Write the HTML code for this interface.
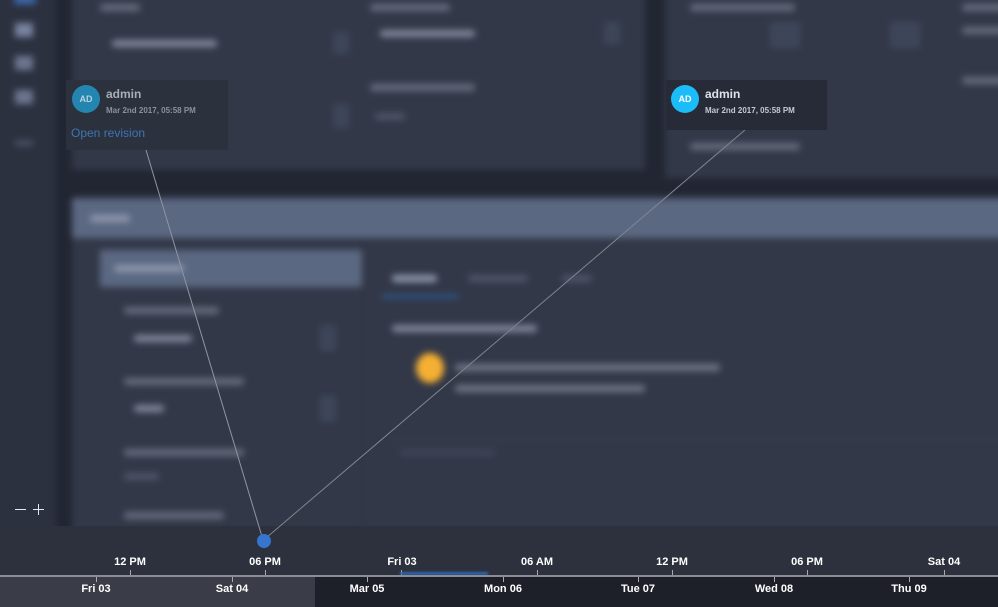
<!DOCTYPE html>
<html><head><meta charset="utf-8"><style>
*{margin:0;padding:0;box-sizing:border-box}
html,body{width:998px;height:607px;overflow:hidden}
body{background:#222632;font-family:"Liberation Sans",sans-serif;position:relative}
.clip{position:absolute;left:0;top:0;width:998px;height:607px;overflow:hidden}
.bg{position:absolute;left:-20px;top:-20px;width:1038px;height:627px;filter:blur(3.5px);background:#222632}
.in{position:absolute;left:20px;top:20px;width:998px;height:587px}
.a{position:absolute}
.t{position:absolute;height:7px;background:#656c7e;border-radius:3px}
.tl{position:absolute;color:#fff;font-size:11px;font-weight:bold;transform:translateX(-50%)}
.tk{position:absolute;width:1px;height:5px;background:#aaa}
</style></head><body>
<div class="clip"><div class="bg"><div class="in">
 <div class="a" style="left:-20px;top:-20px;width:76px;height:607px;background:#2c3140"></div>
 <div class="a" style="left:14px;top:-4px;width:22px;height:8px;background:#3f6bb5;border-radius:3px"></div>
 <div class="a" style="left:15px;top:23px;width:18px;height:14px;background:#7884a0"></div>
 <div class="a" style="left:15px;top:56px;width:18px;height:14px;background:#6b7690"></div>
 <div class="a" style="left:15px;top:90px;width:18px;height:14px;background:#6b7690"></div>
 <div class="a" style="left:15px;top:141px;width:18px;height:4px;background:#555d70"></div>
 <div class="a" style="left:72px;top:-20px;width:573px;height:190px;background:#323848"></div>
 <div class="a" style="left:665px;top:-20px;width:353px;height:198px;background:#323848"></div>
 <div class="t" style="left:100px;top:4px;width:40px"></div>
 <div class="t" style="left:112px;top:40px;width:105px;background:#80879a"></div>
 <div class="a" style="left:333px;top:32px;width:16px;height:22px;background:#3d4659"></div>
 <div class="t" style="left:370px;top:4px;width:80px"></div>
 <div class="t" style="left:380px;top:30px;width:95px;background:#80879a"></div>
 <div class="a" style="left:604px;top:22px;width:16px;height:22px;background:#3d4659"></div>
 <div class="t" style="left:370px;top:84px;width:105px"></div>
 <div class="t" style="left:375px;top:113px;width:30px;background:#4d5568"></div>
 <div class="a" style="left:333px;top:104px;width:16px;height:24px;background:#3d4659"></div>
 <div class="t" style="left:690px;top:4px;width:105px"></div>
 <div class="a" style="left:770px;top:22px;width:30px;height:26px;background:#3d4659"></div>
 <div class="a" style="left:890px;top:22px;width:30px;height:26px;background:#3d4659"></div>
 <div class="t" style="left:962px;top:4px;width:50px"></div>
 <div class="t" style="left:962px;top:27px;width:50px"></div>
 <div class="t" style="left:962px;top:77px;width:50px"></div>
 <div class="t" style="left:690px;top:143px;width:110px"></div>
 <div class="a" style="left:72px;top:198px;width:946px;height:40px;background:#5b6882"></div>
 <div class="t" style="left:90px;top:215px;width:40px;background:#8e98ad"></div>
 <div class="a" style="left:72px;top:238px;width:946px;height:300px;background:#323848"></div>
 <div class="a" style="left:100px;top:250px;width:262px;height:37px;background:#5b6882"></div>
 <div class="t" style="left:114px;top:265px;width:70px;background:#8e98ad"></div>
 <div class="a" style="left:362px;top:238px;width:1px;height:300px;background:#2a2f3c"></div>
 <div class="t" style="left:124px;top:307px;width:95px"></div>
 <div class="t" style="left:134px;top:335px;width:58px;background:#80879a"></div>
 <div class="a" style="left:320px;top:325px;width:16px;height:26px;background:#3d4659"></div>
 <div class="t" style="left:124px;top:378px;width:120px"></div>
 <div class="t" style="left:134px;top:405px;width:30px;background:#80879a"></div>
 <div class="a" style="left:320px;top:396px;width:16px;height:26px;background:#3d4659"></div>
 <div class="t" style="left:124px;top:449px;width:120px"></div>
 <div class="t" style="left:124px;top:473px;width:35px;background:#4d5568"></div>
 <div class="t" style="left:124px;top:512px;width:100px"></div>
 <div class="t" style="left:392px;top:275px;width:45px;background:#8e98ad"></div>
 <div class="a" style="left:382px;top:295px;width:76px;height:3px;background:#2d5fa0"></div>
 <div class="t" style="left:468px;top:275px;width:60px;background:#4d5568"></div>
 <div class="t" style="left:562px;top:275px;width:30px;background:#4d5568"></div>
 <div class="t" style="left:392px;top:325px;width:145px;background:#80879a"></div>
 <div class="a" style="left:416px;top:353px;width:28px;height:30px;background:#f5b032;border-radius:50%"></div>
 <div class="t" style="left:455px;top:364px;width:265px;background:#6f7586"></div>
 <div class="t" style="left:455px;top:385px;width:190px;background:#6f7586"></div>
 <div class="a" style="left:390px;top:438px;width:628px;height:1px;background:#3c4353"></div>
 <div class="t" style="left:400px;top:449px;width:95px;background:#3d4456"></div>
</div></div></div>
<div class="a" style="left:0;top:526px;width:998px;height:50px;background:#2c313d"></div>
<svg class="a" style="left:0;top:0" width="998" height="607">
 <line x1="146" y1="150" x2="263" y2="540" stroke="#9095a0" stroke-width="1"/>
 <line x1="745" y1="130" x2="266" y2="538" stroke="#80858f" stroke-width="1"/>
 <circle cx="264" cy="541" r="7" fill="#3575cf"/>
</svg>
<div class="a" style="left:66px;top:80px;width:162px;height:70px;background:#2c313e"></div>
<div class="a" style="left:72px;top:85px;width:28px;height:28px;border-radius:50%;background:#2486b0;color:#b6d2de;font-size:9px;line-height:28px;text-align:center;font-weight:bold">AD</div>
<div class="a" style="left:106px;top:87px;color:#a8adb8;font-size:12px;font-weight:bold">admin</div>
<div class="a" style="left:106px;top:106px;color:#8c919b;font-size:8px;font-weight:bold">Mar 2nd 2017, 05:58 PM</div>
<div class="a" style="left:71px;top:126px;color:#3e75b5;font-size:12px">Open revision</div>
<div class="a" style="left:666px;top:80px;width:161px;height:50px;background:#262b37"></div>
<div class="a" style="left:671px;top:85px;width:28px;height:28px;border-radius:50%;background:#1cbcf8;color:#fff;font-size:9px;line-height:28px;text-align:center;font-weight:bold">AD</div>
<div class="a" style="left:705px;top:87px;color:#dfe2e8;font-size:12px;font-weight:bold">admin</div>
<div class="a" style="left:705px;top:106px;color:#c5c9d1;font-size:8px;font-weight:bold">Mar 2nd 2017, 05:58 PM</div>
<div class="a" style="left:15px;top:509px;width:11px;height:1px;background:#e6e8ee"></div>
<div class="a" style="left:33px;top:509px;width:11px;height:1px;background:#e6e8ee"></div>
<div class="a" style="left:38px;top:504px;width:1px;height:11px;background:#e6e8ee"></div>
<div class="tl" style="left:130px;top:556px">12 PM</div>
<div class="tl" style="left:265px;top:556px">06 PM</div>
<div class="tl" style="left:402px;top:556px">Fri 03</div>
<div class="tl" style="left:537px;top:556px">06 AM</div>
<div class="tl" style="left:672px;top:556px">12 PM</div>
<div class="tl" style="left:807px;top:556px">06 PM</div>
<div class="tl" style="left:944px;top:556px">Sat 04</div>
<div class="tk" style="left:130px;top:570px"></div><div class="tk" style="left:265px;top:570px"></div><div class="tk" style="left:401px;top:570px"></div><div class="tk" style="left:537px;top:570px"></div><div class="tk" style="left:672px;top:570px"></div><div class="tk" style="left:807px;top:570px"></div><div class="tk" style="left:944px;top:570px"></div>
<div class="a" style="left:400px;top:572px;width:88px;height:3px;background:#2f66b5;filter:blur(1px)"></div>
<div class="a" style="left:0;top:575px;width:998px;height:2px;background:#8a8d94"></div>
<div class="a" style="left:0;top:577px;width:315px;height:30px;background:#3a3d47"></div>
<div class="a" style="left:315px;top:577px;width:683px;height:30px;background:#1e2029"></div>
<div class="tk" style="left:96px;top:577px"></div><div class="tk" style="left:232px;top:577px"></div><div class="tk" style="left:367px;top:577px"></div><div class="tk" style="left:503px;top:577px"></div><div class="tk" style="left:638px;top:577px"></div><div class="tk" style="left:774px;top:577px"></div><div class="tk" style="left:909px;top:577px"></div>
<div class="tl" style="left:96px;top:583px">Fri 03</div>
<div class="tl" style="left:232px;top:583px">Sat 04</div>
<div class="tl" style="left:367px;top:583px">Mar 05</div>
<div class="tl" style="left:503px;top:583px">Mon 06</div>
<div class="tl" style="left:638px;top:583px">Tue 07</div>
<div class="tl" style="left:774px;top:583px">Wed 08</div>
<div class="tl" style="left:909px;top:583px">Thu 09</div>
</body></html>
